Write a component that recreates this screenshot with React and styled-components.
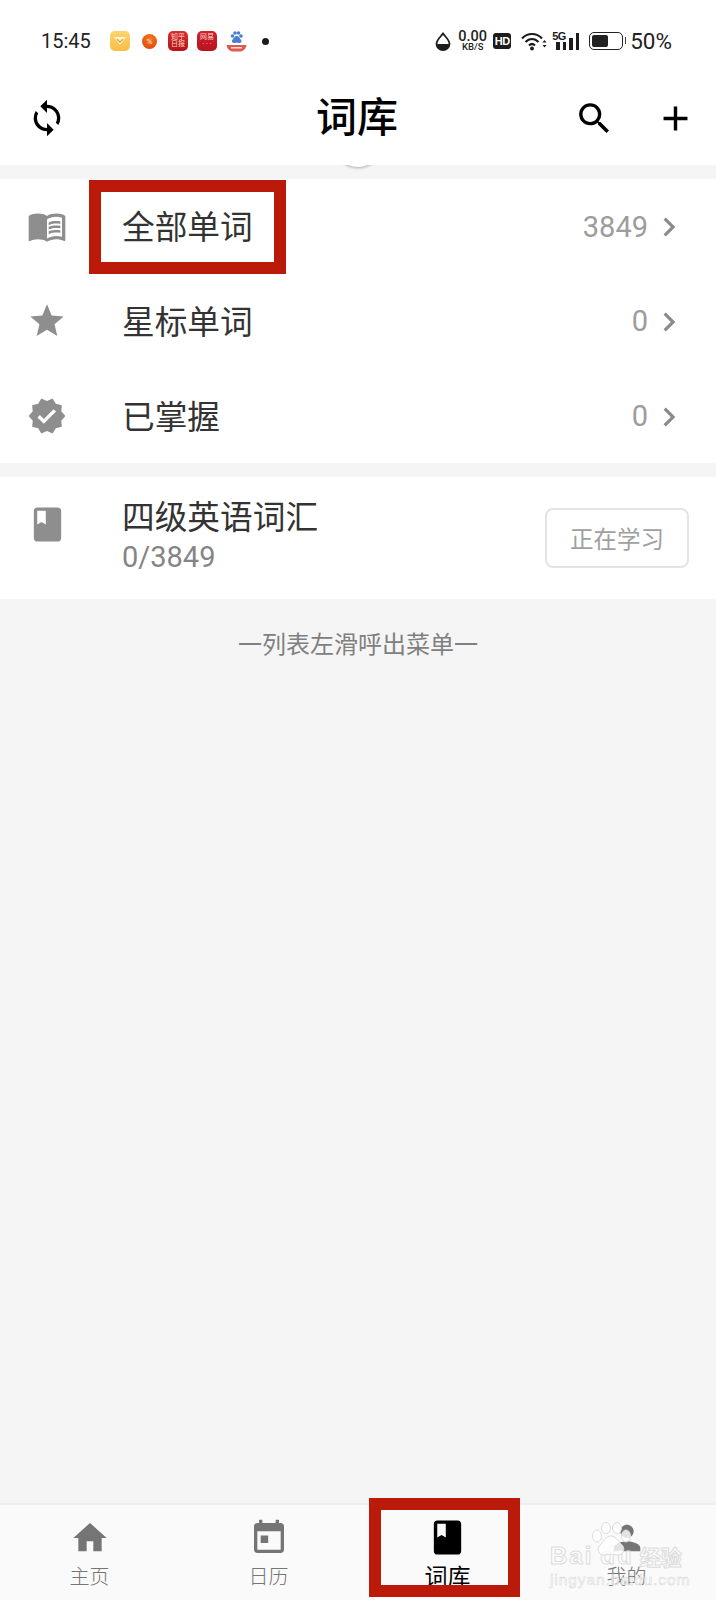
import React from "react";
import styled, { createGlobalStyle } from "styled-components";
import { MdSync, MdSearch, MdAdd, MdMenuBook, MdStar, MdVerified, MdBook, MdChevronRight, MdHome, MdPerson } from "react-icons/md";

const wordRows = [
    { icon: MdMenuBook, label: "全部单词", count: "3849", marked: true },
    { icon: MdStar, label: "星标单词", count: "0" },
    { icon: MdVerified, label: "已掌握", count: "0" },
];

const App = () => {
    return (
        <Page>
            <GlobalStyle />
            <StatusBar>
                <Clock>15:45</Clock>
                <AppIcons>
                    <AppIcon $bg="linear-gradient(#fdd56f,#f8bd45)">
                        <svg width="14" height="10" viewBox="0 0 14 10"><path d="M1 1h12L7 9z" fill="#fff4d2" /><path d="M4 3l3 3 3-3" stroke="#e0a63a" strokeWidth="1.4" fill="none" /></svg>
                    </AppIcon>
                    <OrangeDot>%</OrangeDot>
                    <AppIcon $bg="linear-gradient(#d9302c,#b5141a)"><AppIconText>知乎<br />日报</AppIconText></AppIcon>
                    <AppIcon $bg="linear-gradient(#d4202c,#b5141f)"><AppIconText>网易<br />· · ·</AppIconText></AppIcon>
                    <BaiduApp />
                    <NoticeDot />
                </AppIcons>
                <StatusRight>
                    <svg width="16" height="19" viewBox="0 0 16 19">
                        <path d="M8 1.5c2.5 3.4 6.5 6.5 6.5 10.4A6.4 6.4 0 0 1 8 18a6.4 6.4 0 0 1-6.5-6.1C1.500 8 5.500 4.900 8 1.500z" fill="none" stroke="#1c1c1c" strokeWidth="1.8" />
                        <path d="M1.800 12h12.400A6.300 6.300 0 0 1 8 18a6.300 6.300 0 0 1-6.200-6z" fill="#1c1c1c" />
                    </svg>
                    <NetSpeed><b>0.00</b><small>KB/S</small></NetSpeed>
                    <HdBadge>HD</HdBadge>
                    <svg width="26" height="19" viewBox="0 0 26 19">
                        <path d="M1 6.500C6.500 .5 15.500 .5 21 6.500M4.500 10c3.800-4 9.200-4 13 0M8 13.500c1.800-1.800 4.200-1.800 6 0" fill="none" stroke="#1c1c1c" strokeWidth="2.200" />
                        <circle cx="11" cy="16.500" r="2" fill="#1c1c1c" />
                        <path d="M21.500 10.500l2-2.500 2 2.500zM21.500 13l2 2.500 2-2.500z" fill="#1c1c1c" />
                    </svg>
                    <SignalWrap>
                        <FiveG>5G</FiveG>
                        <SignalBars>
                            <SignalBar $h={8} />
                            <SignalBar $h={8} />
                            <SignalBar $h={12} />
                            <SignalBar $h={17} />
                        </SignalBars>
                    </SignalWrap>
                    <Battery><BatteryFill /></Battery>
                    <Percent>50%</Percent>
                </StatusRight>
            </StatusBar>

            <Header>
                <HeaderIcon><MdSync size={40} /></HeaderIcon>
                <Title>词库</Title>
                <HeaderActions>
                    <MdSearch size={41} />
                    <MdAdd size={41} />
                </HeaderActions>
            </Header>

            <Main>
                <GapBand>
                    <PullCircle />
                </GapBand>

                <ListCard>
                    {wordRows.map((row) => (
                        <WordRow key={row.label}>
                            <RowIcon><row.icon size={40} /></RowIcon>
                            <WordLabel>{row.label}</WordLabel>
                            <RowCount>{row.count}</RowCount>
                            <Chevron><MdChevronRight size={38} /></Chevron>
                            {row.marked && <RowHighlight />}
                        </WordRow>
                    ))}
                </ListCard>

                <GapBand />

                <BookRow>
                    <BookIcon><MdBook size={41} /></BookIcon>
                    <BookInfo>
                        <RowLabel>四级英语词汇</RowLabel>
                        <BookProgress>0/3849</BookProgress>
                    </BookInfo>
                    <StudyButton>正在学习</StudyButton>
                </BookRow>

                <Hint>一列表左滑呼出菜单一</Hint>
            </Main>

            <TabBar>
                <TabItem>
                    <TabIcon><MdHome size={40} /></TabIcon>
                    <TabLabel>主页</TabLabel>
                </TabItem>
                <TabItem>
                    <TabIcon>
                        <svg width="40" height="40" viewBox="0 0 24 24" fill="currentColor">
                            <path d="M11.500 10.500H7v4.500h4.500zM16 1v2H8V1H6v2H5c-1.110 0-1.990.9-1.990 2L3 19c0 1.100.89 2 2 2h14c1.100 0 2-.9 2-2V5c0-1.100-.9-2-2-2h-1V1h-2zm3 18H5V8h14v11z" />
                        </svg>
                    </TabIcon>
                    <TabLabel>日历</TabLabel>
                </TabItem>
                <TabItem $active>
                    <TabIcon><MdBook size={41} /></TabIcon>
                    <TabLabel $active>词库</TabLabel>
                    <TabHighlight />
                </TabItem>
                <TabItem>
                    <TabIcon><MdPerson size={40} /></TabIcon>
                    <TabLabel>我的</TabLabel>
                    <Watermark>
                        <WatermarkTop>
                            <span>Bai</span>
                            <span>du</span>
                            <span>经验</span>
                        </WatermarkTop>
                        <WatermarkUrl>jingyan.baidu.com</WatermarkUrl>
                    </Watermark>
                    <PawPrint viewBox="0 0 44 36">
                        <ellipse cx="6" cy="14" rx="4.500" ry="6" />
                        <ellipse cx="15" cy="6" rx="4.500" ry="5.500" />
                        <ellipse cx="26" cy="6" rx="4.500" ry="5.500" />
                        <ellipse cx="35" cy="14" rx="4.500" ry="6" />
                        <path d="M20 14c6 0 7 6 11 9 4 4 1 11-5 10-4-1-8-1-12 0-6 1-9-6-5-10 4-3 5-9 11-9z" />
                    </PawPrint>
                </TabItem>
            </TabBar>
        </Page>
    );
}

export default App;


const GlobalStyle = createGlobalStyle`
    body {
        margin:0;
        background:#f5f5f5;
        font-family:Roboto, "Noto Sans CJK SC", sans-serif;
    }
`

const Page = styled.div`
    width:716px;
    height:1600px;
    display:flex;
    flex-direction:column;
    overflow:hidden;
    background:#f5f5f5;
`

const StatusBar = styled.div`
    height:82px;
    flex-shrink:0;
    box-sizing:border-box;
    padding:0 44px 0 41px;
    display:flex;
    align-items:center;
    background:#fff;
`

const Clock = styled.span`
    font-size:20px;
    color:#222;
    width:69px;
`

const AppIcons = styled.div`
    display:flex;
    align-items:center;
`

const AppIcon = styled.div`
    width:20px;
    height:20px;
    border-radius:5px;
    background:${(p) => p.$bg};
    display:flex;
    align-items:center;
    justify-content:center;
    margin-right:9px;
    overflow:hidden;
`

const AppIconText = styled.span`
    font-size:7px;
    line-height:7px;
    color:#f8d8d0;
    text-align:center;
    white-space:nowrap;
`

const OrangeDot = styled.div`
    width:15px;
    height:15px;
    margin:0 11px 0 3px;
    border-radius:50%;
    background:radial-gradient(circle at 50% 30%, #f47a1c, #d9410d);
    color:#ffe6c8;
    font-size:8px;
    line-height:15px;
    text-align:center;
`

const BaiduApp = () => (
    <svg width="21" height="22" viewBox="0 0 21 22" style={{ marginRight: 15 }}>
        <g fill="#4a7fd0">
            <circle cx="6.500" cy="6" r="1.800" />
            <circle cx="9" cy="3" r="1.800" />
            <circle cx="12.500" cy="3" r="1.800" />
            <circle cx="15" cy="6" r="1.800" />
            <path d="M10.700 6c2.500 0 3 2.500 4.500 4 1 1.800-.5 3.500-2.500 3-1.300-.3-2.800-.3-4 0-2 .5-3.500-1.200-2.500-3C8 8.500 8.200 6 10.700 6z" />
        </g>
        <path d="M.5 15h20c-.6 4-3.500 6.500-6.500 6.500H7C4 21.500 1.100 19 .5 15z" fill="#de5a50" />
        <rect x="5" y="17" width="11" height="1.500" fill="#fbdcd8" />
    </svg>
)

const NoticeDot = styled.div`
    width:7px;
    height:7px;
    border-radius:50%;
    background:#1c1c1c;
`

const StatusRight = styled.div`
    margin-left:auto;
    display:flex;
    align-items:center;
    gap:7px;
`

const NetSpeed = styled.div`
    width:29px;
    display:flex;
    flex-direction:column;
    align-items:center;
    color:#222;
    b {
        font-size:14.5px;
        line-height:11px;
        font-weight:500;
    }
    small {
        font-size:9.5px;
        line-height:9px;
        font-weight:500;
    }
`

const HdBadge = styled.div`
    width:18px;
    height:16px;
    margin:0 3px 0 -1px;
    border-radius:3px;
    background:#1c1c1c;
    color:#fff;
    font-family:"Liberation Sans", sans-serif;
    font-size:11px;
    font-weight:700;
    line-height:16px;
    text-align:center;
    letter-spacing:-0.5px;
`

const SignalWrap = styled.div`
    position:relative;
    width:27px;
    height:18px;
    margin-left:-2px;
`

const FiveG = styled.span`
    position:absolute;
    top:-1px;
    left:0;
    font-family:"Liberation Sans", sans-serif;
    font-size:11px;
    line-height:10px;
    font-weight:700;
    color:#1c1c1c;
    letter-spacing:-0.5px;
`

const SignalBars = styled.div`
    height:18px;
    display:flex;
    align-items:flex-end;
    justify-content:flex-end;
    gap:3px;
`

const SignalBar = styled.div`
    width:3.5px;
    height:${(p) => p.$h}px;
    background:#1c1c1c;
`

const Battery = styled.div`
    position:relative;
    box-sizing:border-box;
    width:34px;
    height:18px;
    padding:2px;
    margin-left:3px;
    border:1.5px solid #222;
    border-radius:5px;
    &::after {
        content:"";
        position:absolute;
        right:-4px;
        top:4px;
        width:1.5px;
        height:7px;
        background:#444;
    }
`

const BatteryFill = styled.div`
    width:16px;
    height:100%;
    border-radius:2px;
    background:#222;
`

const Percent = styled.span`
    font-size:22.5px;
    color:#222;
`

const Header = styled.div`
    height:83px;
    flex-shrink:0;
    box-sizing:border-box;
    display:flex;
    align-items:center;
    justify-content:center;
    position:relative;
    padding:0 2px 11px 0;
    background:#fff;
    color:#000;
`

const HeaderIcon = styled.div`
    position:absolute;
    left:27px;
    top:16px;
    display:flex;
`

const Title = styled.h1`
    margin:0;
    font-size:41px;
    line-height:56px;
    font-weight:500;
`

const HeaderActions = styled.div`
    position:absolute;
    left:574px;
    top:16px;
    display:flex;
    gap:40px;
`

const Main = styled.div`
    flex:1;
    display:flex;
    flex-direction:column;
`

const GapBand = styled.div`
    height:14px;
    flex-shrink:0;
    position:relative;
    overflow:hidden;
    background:#f5f5f5;
`

const PullCircle = styled.div`
    position:absolute;
    left:333px;
    top:-48px;
    width:50px;
    height:50px;
    border-radius:50%;
    background:#fff;
    box-shadow:0 1px 3px rgba(0,0,0,.3);
`

const ListCard = styled.div`
    display:flex;
    flex-direction:column;
    background:#fff;
`

const WordRow = styled.div`
    height:94.67px;
    position:relative;
    display:flex;
    align-items:center;
    padding:0 28px 0 27px;
`

const RowIcon = styled.div`
    width:95px;
    flex-shrink:0;
    display:flex;
    color:#8e8e8e;
`

const RowLabel = styled.div`
    font-family:"Noto Sans CJK SC", sans-serif;
    font-size:32.7px;
    line-height:40px;
    font-weight:400;
    color:#333;
`

const WordLabel = styled(RowLabel)`
    padding-bottom:2px;
`

const RowCount = styled.span`
    margin-left:auto;
    padding-top:1px;
    font-size:29px;
    color:#9c9c9c;
`

const Chevron = styled.div`
    display:flex;
    margin-left:2px;
    padding-top:2px;
    color:#8a8a8a;
`

const RowHighlight = styled.div`
    position:absolute;
    left:89px;
    top:1px;
    width:197px;
    height:94px;
    box-sizing:border-box;
    border:12.5px solid #bb1a0b;
`

const BookRow = styled.div`
    height:122px;
    flex-shrink:0;
    box-sizing:border-box;
    display:flex;
    align-items:center;
    padding:0 27px 0 27px;
    background:#fff;
`

const BookIcon = styled.div`
    width:95px;
    flex-shrink:0;
    display:flex;
    margin-bottom:26px;
    color:#8e8e8e;
`

const BookInfo = styled.div`
    display:flex;
    flex-direction:column;
    padding-bottom:6px;
`

const BookProgress = styled.div`
    margin-top:4px;
    font-size:29px;
    line-height:36px;
    color:#858585;
`

const StudyButton = styled.button`
    margin-left:auto;
    width:144px;
    height:60px;
    background:#fff;
    border:2px solid #e4e4e4;
    border-radius:8px;
    font-family:"Noto Sans CJK SC", sans-serif;
    font-size:23.5px;
    font-weight:400;
    color:#a0a0a0;
`

const Hint = styled.div`
    margin-top:26px;
    text-align:center;
    font-family:"Noto Sans CJK SC", sans-serif;
    font-size:24px;
    line-height:36px;
    font-weight:400;
    color:#808080;
`

const TabBar = styled.div`
    height:97px;
    flex-shrink:0;
    box-sizing:border-box;
    display:grid;
    grid-template-columns:repeat(4, 1fr);
    background:#fafafa;
    border-top:2px solid #efefef;
`

const TabItem = styled.div`
    position:relative;
    display:flex;
    flex-direction:column;
    align-items:center;
    padding-top:12px;
    color:${(p) => (p.$active ? "#000" : "#757575")};
`

const TabIcon = styled.div`
    height:41px;
    display:flex;
    align-items:center;
`

const TabLabel = styled.div`
    margin-top:${(p) => (p.$active ? "3px" : "4px")};
    font-family:"Noto Sans CJK SC", sans-serif;
    font-size:${(p) => (p.$active ? "23px" : "20px")};
    line-height:28px;
    font-weight:${(p) => (p.$active ? 400 : 300)};
`

const TabHighlight = styled.div`
    position:absolute;
    left:11px;
    top:-7px;
    width:151px;
    height:99px;
    box-sizing:border-box;
    border:12.5px solid #bb1a0b;
`

const Watermark = styled.div`
    position:absolute;
    left:13px;
    top:40px;
    display:flex;
    flex-direction:column;
    white-space:nowrap;
    font-family:"Liberation Sans", sans-serif;
    color:rgba(255,255,255,.8);
    -webkit-text-stroke:1px #dcdcdc;
`

const WatermarkTop = styled.div`
    display:flex;
    align-items:center;
    gap:7px;
    font-size:24px;
    line-height:22px;
    font-weight:700;
    letter-spacing:2px;
    span:last-child {
        margin-left:-1px;
        letter-spacing:0;
        font-family:"Noto Sans CJK SC", sans-serif;
        font-size:21px;
    }
`

const WatermarkUrl = styled.div`
    margin-top:5px;
    font-size:15.5px;
    line-height:16px;
    letter-spacing:.9px;
    -webkit-text-stroke:.5px #d6d6d6;
`

const PawPrint = styled.svg`
    position:absolute;
    left:54px;
    top:17px;
    width:44px;
    height:36px;
    fill:rgba(255,255,255,.8);
    stroke:#dcdcdc;
    stroke-width:1;
`
